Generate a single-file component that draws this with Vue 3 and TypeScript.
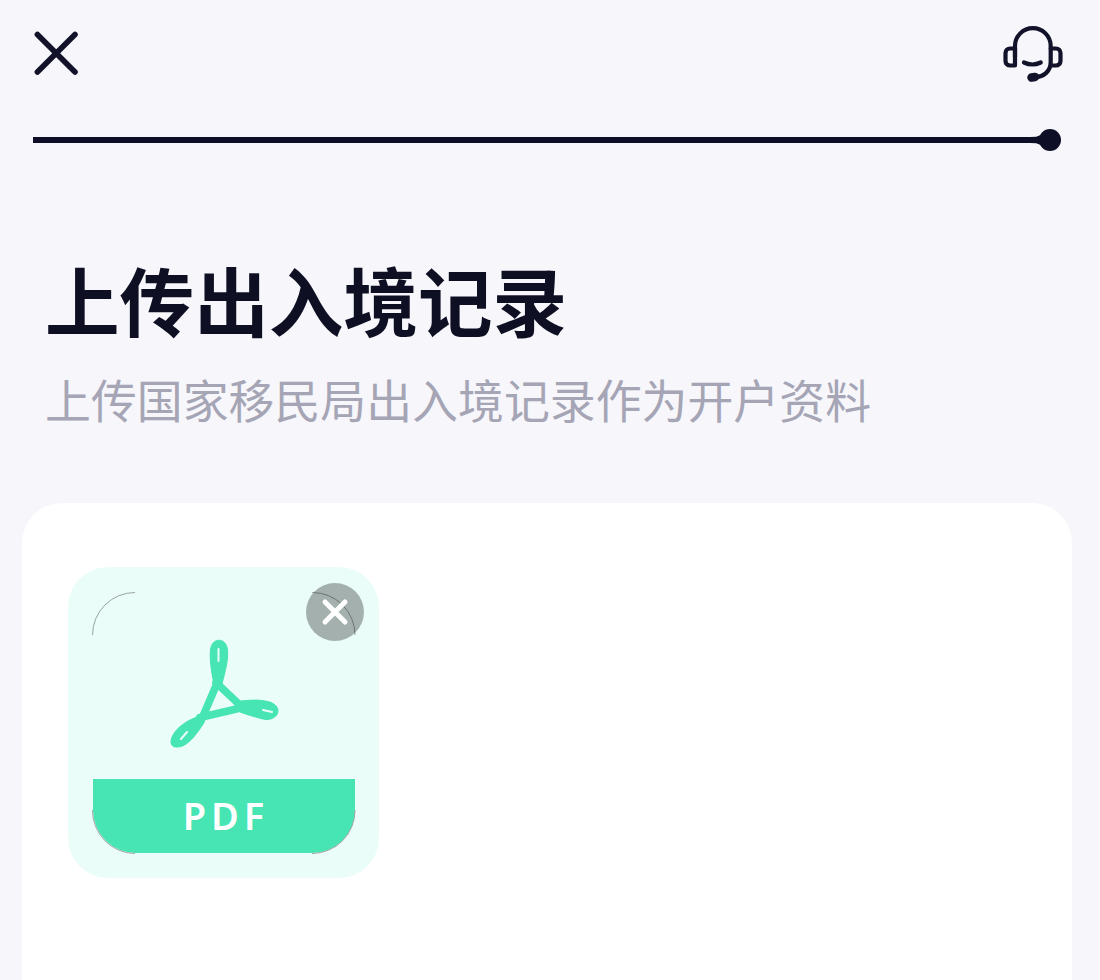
<script setup lang="ts">
const title = '上传出入境记录'
const subtitle = '上传国家移民局出入境记录作为开户资料'
</script>

<template>
  <div class="page">
    <header class="topbar">
      <button class="icon-btn close" type="button" aria-label="关闭">
        <svg width="44" height="44" viewBox="0 0 44 44">
          <path d="M3.4 3.400 L41 41 M41 3.400 L3.400 41" fill="none" stroke="#12122a" stroke-width="5.600" stroke-linecap="round" />
        </svg>
      </button>
      <button class="icon-btn" type="button" aria-label="客服">
        <svg width="65" height="60" viewBox="0 0 65 60" fill="none" stroke="#12122a" stroke-width="4.200" stroke-linecap="round" stroke-linejoin="round">
          <path d="M15 33 V22 A17.85 17.85 0 0 1 50.7 22 V38 C50.7 47 44 53 35 53" />
          <path d="M15 24.5 H10 A4.5 4.5 0 0 0 5.5 29 V37 A4.5 4.5 0 0 0 10 41.5 H15 Z" />
          <path d="M50.7 24.5 H56 A4.5 4.5 0 0 1 60.5 29 V37 A4.5 4.5 0 0 1 56 41.5 H50.7" />
          <path d="M24 38.5 Q32.3 42.5 40.7 38.5" />
          <path d="M31.5 53.5 L35 53" stroke-width="8.500" />
        </svg>
      </button>
    </header>

    <div class="progress">
      <div class="progress-line"></div>
      <div class="progress-neck"></div>
      <div class="progress-dot"></div>
    </div>

    <section class="intro">
      <h1 class="title">{{ title }}</h1>
      <p class="subtitle">{{ subtitle }}</p>
    </section>

    <main class="card">
      <div class="tile">
        <svg class="outline" width="264" height="262" viewBox="0 0 264 262" fill="none" stroke="#9aa5a2" stroke-width="1">
          <path d="M0.5 43 A42.5 42.5 0 0 1 43 0.5" />
          <path d="M220 0.5 A42.5 42.5 0 0 1 263 43" />
          <path d="M0.5 218 A43 43 0 0 0 43 261.5" />
          <path d="M263 218 A43 43 0 0 1 220 261.5" />
        </svg>
        <svg class="acrobat" width="150" height="140" viewBox="0 0 150 140" fill="none">
          <g fill="#46e5b3" stroke="#46e5b3" stroke-width="1" stroke-linejoin="round">
            <path d="M64 64 C61 50 59.500 38 60.500 30 C61.500 17 76.500 17 77.500 30 C78.500 40 75 52 72 64 Z" />
            <path d="M88 81.500 C98 80 108 79.500 115 81 C123 82 128 86 128 91 C128 97 120 101 113 99 C105 97 98 95 90 92 Z" />
            <path d="M50 96 C40 99 30 105 25 112 C19 120 20 127 26 127 C33 128 41 121 46 114 C50 109 53 105 55 99 Z" />
          </g>
          <path d="M68.500 60 L50.500 102 M66 62.500 L93 88 M50 97.500 L96 86.800" stroke="#46e5b3" stroke-width="7.600" stroke-linecap="round" />
          <path d="M68.500 29 V41 M113 90 L122 92 M31 119 L37 112" stroke="#ebfdf8" stroke-width="2" stroke-linecap="round" />
        </svg>
        <div class="band">PDF</div>
        <button class="remove" type="button" aria-label="删除">
          <svg width="30" height="30" viewBox="0 0 30 30">
            <path d="M5 5 L25 25 M25 5 L5 25" fill="none" stroke="#ffffff" stroke-width="5" stroke-linecap="round" />
          </svg>
        </button>
      </div>
    </main>
  </div>
</template>

<style scoped>
.page {
  height: 980px;
  box-sizing: border-box;
  overflow: hidden;
  display: flex;
  flex-direction: column;
  background: #f6f6fb;
  font-family: "Noto Sans CJK SC", "Noto Sans", sans-serif;
}
.topbar {
  display: flex;
  justify-content: space-between;
  align-items: flex-start;
  padding: 24px 35px 0 34px;
  height: 110px;
  box-sizing: border-box;
}
.icon-btn {
  padding: 0;
  border: 0;
  background: none;
  display: block;
  line-height: 0;
}
.close {
  margin-top: 7px;
}
.progress {
  display: flex;
  align-items: center;
  height: 24px;
  margin: 18px 39px 0 33px;
}
.progress-line {
  flex: 1;
  height: 6px;
  background: #0e0e26;
}
.progress-neck {
  width: 14px;
  height: 16px;
  margin-right: -5px;
  background: #0e0e26;
  clip-path: polygon(0 31%, 45% 30%, 75% 18%, 100% 0, 100% 100%, 75% 82%, 45% 70%, 0 69%);
}
.progress-dot {
  width: 22px;
  height: 22px;
  border-radius: 50%;
  background: #0e0e26;
}
.intro {
  padding: 0 0 0 45px;
}
.title {
  margin: 96px 0 0;
  font-size: 74.6px;
  line-height: 100px;
  font-weight: 700;
  color: #0f0f24;
}
.subtitle {
  margin: 18px 0 0;
  font-size: 45.9px;
  line-height: 64px;
  font-weight: 400;
  color: #a5a5b5;
}
.card {
  flex: 1;
  margin: 73px 28px 0 22px;
  background: #ffffff;
  border-radius: 40px 40px 0 0;
  padding: 64px 0 0 46px;
}
.tile {
  position: relative;
  width: 311px;
  height: 311px;
  box-sizing: border-box;
  padding: 25px 24px 0 25px;
  border-radius: 40px;
  background: #ebfdf8;
}
.outline {
  position: absolute;
  left: 24px;
  top: 25px;
}
.acrobat {
  display: block;
  margin: 28px 0 19px 57px;
}
.band {
  height: 74px;
  width: 262px;
  background: #46e5b3;
  border-radius: 0 0 43px 43px;
  color: #ffffff;
  font-family: "Noto Sans", sans-serif;
  font-size: 38px;
  font-weight: 600;
  letter-spacing: 5px;
  text-indent: 4px;
  line-height: 73px;
  text-align: center;
}
.remove {
  position: absolute;
  right: 15px;
  top: 16px;
  width: 58px;
  height: 58px;
  padding: 0;
  border: 0;
  border-radius: 50%;
  background: rgba(0, 0, 0, 0.3);
  display: flex;
  align-items: center;
  justify-content: center;
}
</style>

<style>
html,
body {
  background: #f6f6fb;
}
</style>
